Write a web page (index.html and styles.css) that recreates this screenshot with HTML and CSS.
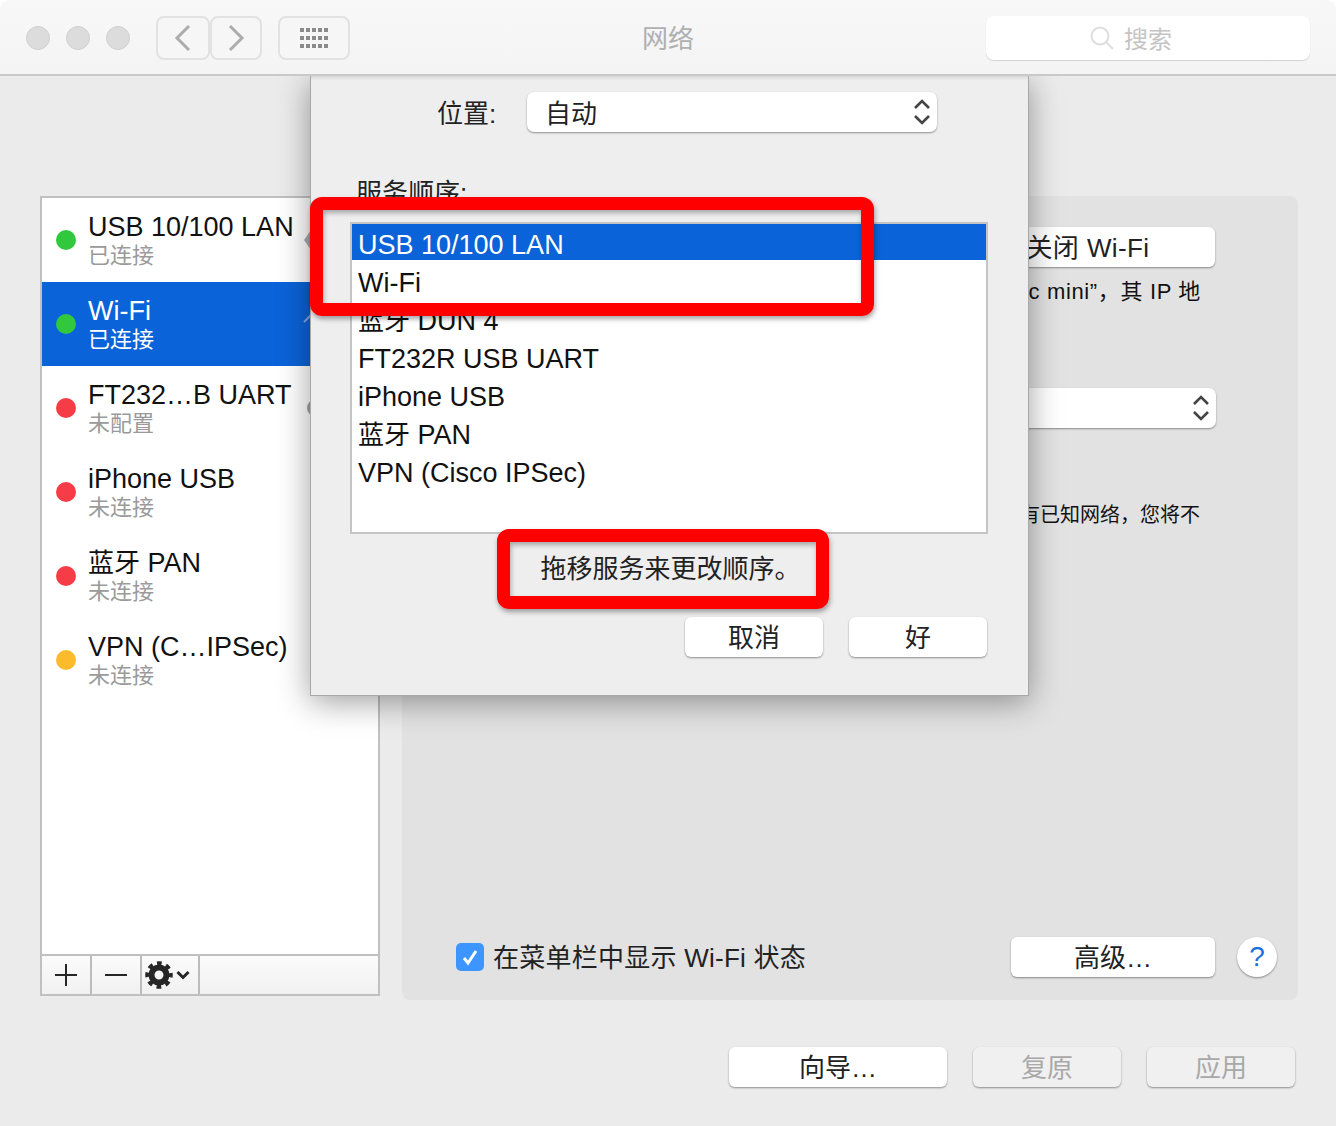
FILE: index.html
```html
<!DOCTYPE html>
<html lang="zh-CN">
<head>
<meta charset="utf-8">
<title>网络</title>
<link rel="stylesheet" href="styles.css">
</head>
<body>
<div class="window">
  <header class="titlebar">
    <div class="lights"><span class="light"></span><span class="light"></span><span class="light"></span></div>
    <div class="nav">
      <button class="tool tool-back"><svg width="20" height="28" viewBox="0 0 20 28"><path d="M16 2 4 14l12 12" class="chev"/></svg></button>
      <button class="tool tool-fwd"><svg width="20" height="28" viewBox="0 0 20 28"><path d="M4 2l12 12L4 26" class="chev"/></svg></button>
    </div>
    <button class="tool tool-grid">
      <span class="grid"><i></i><i></i><i></i><i></i><i></i><i></i><i></i><i></i><i></i><i></i><i></i><i></i><i></i><i></i><i></i></span>
    </button>
    <h1 class="title">网络</h1>
    <div class="search">
      <svg width="24" height="24" viewBox="0 0 24 24"><circle cx="10" cy="10" r="8.5" class="lens"/><path d="M16 16l7 7" class="lens"/></svg>
      <span class="search-text">搜索</span>
    </div>
  </header>

  <main class="content">
    <aside class="sidebar">
      <div class="services">
        <div class="service">
          <span class="dot green"></span>
          <div class="service-text"><div class="name">USB 10/100 LAN</div><div class="sub">已连接</div></div>
          <svg class="peek" width="20" height="24" viewBox="0 0 20 24"><path d="M8 2 1 12l7 10 7-10z" fill="#a8b0bc"/></svg>
        </div>
        <div class="service active">
          <span class="dot green"></span>
          <div class="service-text"><div class="name">Wi-Fi</div><div class="sub">已连接</div></div>
          <svg class="peek" width="20" height="24" viewBox="0 0 20 24"><path d="M1 10 8 3" stroke="#7fa9e6" stroke-width="2" fill="none"/></svg>
        </div>
        <div class="service">
          <span class="dot red"></span>
          <div class="service-text"><div class="name">FT232…B UART</div><div class="sub">未配置</div></div>
          <svg class="peek" width="20" height="24" viewBox="0 0 20 24"><circle cx="12" cy="12" r="8" fill="#9da3ab"/></svg>
        </div>
        <div class="service">
          <span class="dot red"></span>
          <div class="service-text"><div class="name">iPhone USB</div><div class="sub">未连接</div></div>
        </div>
        <div class="service">
          <span class="dot red"></span>
          <div class="service-text"><div class="name"><span class="cjk">蓝牙</span> PAN</div><div class="sub">未连接</div></div>
        </div>
        <div class="service">
          <span class="dot yellow"></span>
          <div class="service-text"><div class="name">VPN (C…IPSec)</div><div class="sub">未连接</div></div>
        </div>
      </div>
      <div class="list-tools">
        <div class="cell cell-sq"><svg width="24" height="24" viewBox="0 0 24 24"><path d="M12 1v22M1 12h22" class="thin"/></svg></div>
        <div class="cell cell-sq"><svg width="24" height="24" viewBox="0 0 24 24"><path d="M1 12h22" class="thin"/></svg></div>
        <div class="cell cell-gear">
          <svg width="28" height="28" viewBox="0 0 28 28">
            <circle cx="14" cy="14" r="7.5" fill="none" stroke="#262626" stroke-width="6"/>
            <circle cx="14" cy="14" r="11.5" fill="none" stroke="#262626" stroke-width="4.5" stroke-dasharray="4.6 4.43" stroke-dashoffset="2.3"/>
          </svg>
          <svg width="14" height="10" viewBox="0 0 14 10"><path d="M1.5 2 7 7.5 12.5 2" fill="none" stroke="#262626" stroke-width="3"/></svg>
        </div>
        <div class="cell cell-fill"></div>
      </div>
    </aside>

    <section class="panel">
      <button class="btn btn-wifi">关闭 Wi-Fi</button>
      <p class="status-line">“Wi-Fi”已连接至“Mac mini”，其 IP 地</p>
      <div class="select panel-select">
        <svg class="updown" width="18" height="28" viewBox="0 0 18 28"><path d="M2 10 9 3l7 7M2 18l7 7 7-7" class="updown-path"/></svg>
      </div>
      <p class="note-line">将自动加入所有已知网络，您将不</p>
      <div class="panel-bottom">
        <label class="check">
          <span class="checkbox"><svg width="20" height="20" viewBox="0 0 20 20"><path d="M4 11l4 5 8-12" fill="none" stroke="#fff" stroke-width="3"/></svg></span>
          <span class="check-text">在菜单栏中显示 Wi-Fi 状态</span>
        </label>
        <button class="btn btn-adv">高级…</button>
        <button class="help">?</button>
      </div>
    </section>
  </main>

  <footer class="footer">
    <button class="btn btn-assist">向导…</button>
    <button class="btn btn-off">复原</button>
    <button class="btn btn-off">应用</button>
  </footer>

  <div class="sheet">
    <div class="location">
      <span class="loc-label">位置:</span>
      <div class="select loc-select">
        <span class="loc-value">自动</span>
        <svg class="updown" width="18" height="28" viewBox="0 0 18 28"><path d="M2 10 9 3l7 7M2 18l7 7 7-7" class="updown-path"/></svg>
      </div>
    </div>
    <div class="order-label">服务顺序:</div>
    <div class="order-list">
      <div class="order-item selected">USB 10/100 LAN</div>
      <div class="order-item">Wi-Fi</div>
      <div class="order-item"><span class="cjk">蓝牙</span> DUN 4</div>
      <div class="order-item">FT232R USB UART</div>
      <div class="order-item">iPhone USB</div>
      <div class="order-item"><span class="cjk">蓝牙</span> PAN</div>
      <div class="order-item">VPN (Cisco IPSec)</div>
    </div>
    <div class="hint">拖移服务来更改顺序。</div>
    <div class="sheet-actions">
      <button class="btn btn-sheet">取消</button>
      <button class="btn btn-sheet">好</button>
    </div>
  </div>

  <div class="mark mark-list"></div>
  <div class="mark mark-hint"></div>
</div>
</body>
</html>
```
FILE: styles.css
```css
* { box-sizing: border-box; }
html, body { margin: 0; padding: 0; background: #fff; }
body {
  width: 1336px;
  height: 1126px;
  overflow: hidden;
  font-family: "Liberation Sans", "Noto Sans CJK SC", sans-serif;
  font-size: 26px;
  color: #111;
}
button { font: inherit; color: inherit; padding: 0; }
.cjk { font-size: 26px; }

.window {
  position: relative;
  width: 1336px;
  height: 1126px;
  display: flex;
  flex-direction: column;
  background: #ebebeb;
  border-radius: 10px 10px 0 0;
  overflow: hidden;
}

/* title bar */
.titlebar {
  position: relative;
  z-index: 6;
  flex: none;
  height: 76px;
  display: flex;
  align-items: flex-start;
  padding: 16px 26px 0;
  background: linear-gradient(#f8f8f8, #f4f4f4);
  border-bottom: 2px solid #c9c9c9;
}
.lights { display: flex; gap: 16px; margin-top: 10px; }
.light {
  width: 24px; height: 24px; border-radius: 50%;
  background: #dcdcdc; border: 1px solid #d0d0d0;
}
.nav { display: flex; margin-left: 26px; }
.tool {
  height: 44px;
  display: flex; align-items: center; justify-content: center;
  background: #f6f6f6;
  border: 2px solid #e2e2e2;
  border-radius: 8px;
}
.tool-back { width: 54px; }
.tool-fwd { width: 52px; }
.tool-grid { width: 72px; margin-left: 16px; }
.chev { fill: none; stroke: #acacac; stroke-width: 3; }
.grid { display: grid; grid-template-columns: repeat(5, 3.5px); grid-auto-rows: 4px; gap: 4px 2.5px; }
.grid i { background: #8a8a8a; }
.title {
  position: absolute;
  left: 0; right: 0; top: 22px;
  margin: 0;
  text-align: center;
  font-size: 26px; line-height: 34px; font-weight: 400;
  color: #b0b0b0;
}
.search {
  margin-left: auto;
  margin-right: 0;
  width: 324px; height: 44px;
  display: flex; align-items: center; justify-content: center; gap: 10px;
  padding-right: 34px;
  background: #fff;
  border-radius: 8px;
  box-shadow: 0 1px 1px #d2d2d2;
  color: #c4c4c4;
  font-size: 24px;
}
.search-text { padding-bottom: 2px; }
.lens { fill: none; stroke: #dedede; stroke-width: 2; }

/* main */
.content {
  flex: none;
  height: 924px;
  display: flex;
  gap: 22px;
  padding: 120px 38px 0 40px;
}
.sidebar {
  width: 340px; height: 800px;
  display: flex; flex-direction: column;
  background: #fff;
  border: 2px solid #c0c0c0;
}
.services { flex: 1; }
.service {
  height: 84px;
  display: flex; align-items: center;
  padding-left: 14px;
}
.dot { flex: none; width: 20px; height: 20px; border-radius: 50%; margin-right: 12px; }
.green { background: #32c83e; }
.red { background: #f63c46; }
.yellow { background: #fcbb2d; }
.service-text { flex: none; width: 215px; padding-top: 2px; }
.name { font-size: 27px; line-height: 30px; }
.sub { font-size: 22px; line-height: 28px; color: #9a9a9a; }
.peek { flex: none; }
.service.active { background: #0a63d8; color: #fff; }
.service.active .sub { color: #fff; }

.list-tools {
  flex: none;
  height: 40px;
  display: flex;
  background: linear-gradient(#fbfbfb, #f1f1f1);
  border-top: 2px solid #c0c0c0;
}
.cell { display: flex; align-items: center; justify-content: center; border-right: 2px solid #bcbcbc; }
.cell-sq { width: 50px; }
.cell-gear { width: 58px; gap: 3px; padding-left: 3px; justify-content: flex-start; }
.cell-fill { flex: 1; border-right: 0; }
.thin { fill: none; stroke: #262626; stroke-width: 2; }

/* right panel */
.panel {
  flex: 1;
  height: 804px;
  display: flex; flex-direction: column; align-items: flex-end;
  padding: 31px 21px 23px 0;
  background: #e2e2e2;
  border-radius: 8px;
}
.btn {
  height: 40px;
  padding-bottom: 3px;
  background: #fff;
  border: 0;
  border-radius: 6px;
  box-shadow: 0 1px 2px rgba(0,0,0,.4);
  color: #222;
}
.btn-wifi { width: 254px; margin-right: 62px; flex: none; letter-spacing: .4px; }
.status-line { margin: 10px 76px 0 0; font-size: 22px; letter-spacing: .65px; line-height: 30px; color: #111; white-space: nowrap; }
.select {
  display: flex; align-items: center; justify-content: space-between;
  height: 40px;
  background: #fff;
  border-radius: 7px;
  box-shadow: 0 1px 2px rgba(0,0,0,.4);
}
.panel-select { width: 660px; margin: 81px 61px 0 0; padding-right: 6px; justify-content: flex-end; flex: none; }
.updown { flex: none; }
.updown-path { fill: none; stroke: #444; stroke-width: 2.6; }
.note-line { margin: 72px 77px 0 0; font-size: 20px; line-height: 30px; color: #111; white-space: nowrap; }
.panel-bottom {
  margin-top: auto;
  width: 821px;
  height: 40px;
  display: flex; align-items: center;
}
.check { display: flex; align-items: center; gap: 9px; margin-right: auto; color: #222; }
.check-text { padding-bottom: 4px; letter-spacing: .25px; }
.checkbox {
  width: 28px; height: 28px;
  display: flex; align-items: center; justify-content: center;
  background: #3d95ff;
  border-radius: 5px;
}
.btn-adv { width: 204px; }
.help {
  width: 40px; height: 40px; margin-left: 22px;
  background: #fff; border: 0; border-radius: 50%;
  box-shadow: 0 1px 2px rgba(0,0,0,.4);
  color: #1a6fe0;
  font-size: 28px;
}

/* footer */
.footer {
  flex: none;
  display: flex; justify-content: flex-end; gap: 26px;
  padding: 47px 41px 0 0;
}
.btn-assist { width: 218px; }
.btn-off { width: 148px; background: #f0f0f0; color: #a8a8a8; }

/* sheet */
.sheet {
  position: absolute;
  z-index: 5;
  left: 310px; top: 76px;
  width: 719px; height: 620px;
  display: flex; flex-direction: column;
  padding: 16px 41px 0 39px;
  background: #eee;
  border-left: 1px solid #a8a8a8;
  border-right: 1px solid #a8a8a8;
  border-bottom: 1px solid #a8a8a8;
  box-shadow: 0 6px 30px rgba(0,0,0,.38), inset 0 5px 4px -4px rgba(0,0,0,.14);
}
.location { display: flex; align-items: center; padding-left: 87px; color: #222; }
.loc-label { width: 90px; padding-bottom: 2px; }
.loc-select { width: 410px; padding: 0 6px 0 18px; }
.loc-value { padding-bottom: 2px; }
.order-label { margin: 44px 0 0 6px; line-height: 34px; color: #222; }
.order-list {
  margin-top: 12px;
  width: 638px; height: 312px;
  background: #fff;
  border: 2px solid #c4c4c4;
}
.order-item {
  height: 38px;
  padding-left: 6px;
  font-size: 27px; line-height: 40px;
}
.order-item.selected {
  height: 36px; line-height: 42px; margin-bottom: 3px;
  background: #0a63d8; color: #fff;
}
.hint { margin-top: 18px; padding-left: 4px; text-align: center; line-height: 34px; color: #222; }
.sheet-actions { display: flex; justify-content: flex-end; gap: 26px; margin-top: 31px; }
.btn-sheet { width: 138px; }

/* red annotation frames */
.mark {
  position: absolute;
  z-index: 7;
  border: 13px solid #fe0000;
  border-radius: 12px;
  box-shadow: 1px 3px 5px rgba(0,0,0,.35), inset 1px 3px 5px rgba(0,0,0,.3);
}
.mark-list { left: 310px; top: 197px; width: 564px; height: 119px; }
.mark-hint { left: 497px; top: 529px; width: 332px; height: 80px; }
```
